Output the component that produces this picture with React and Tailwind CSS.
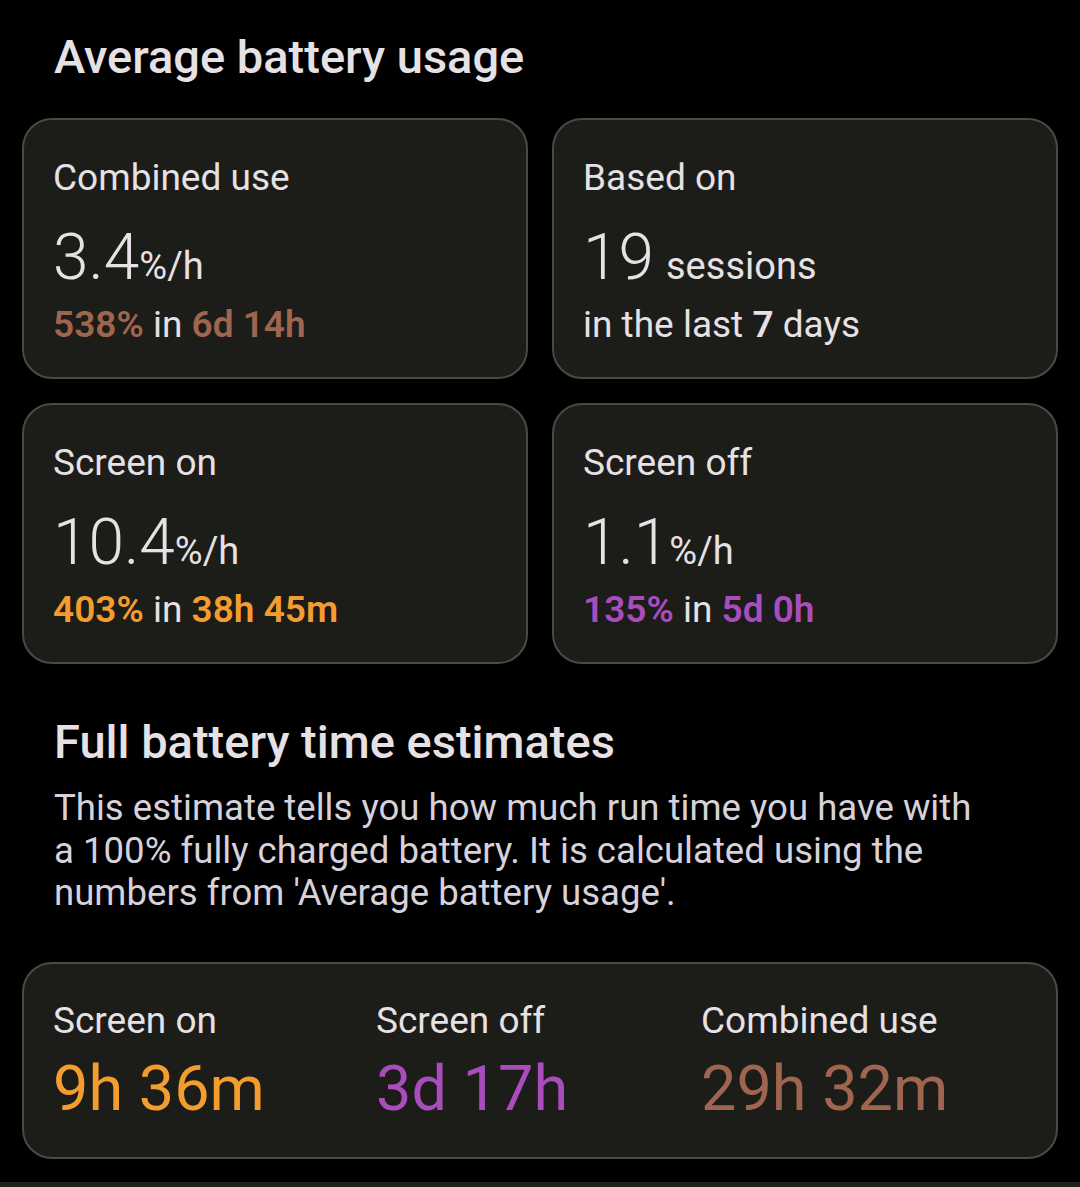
const usage = [
  {
    label: "Combined use",
    value: "3.4",
    unit: "%/h",
    amount: "538%",
    span: "6d 14h",
    color: "text-[#a0654e]",
  },
  { label: "Based on", value: "19", unit: "sessions", days: "7" },
  {
    label: "Screen on",
    value: "10.4",
    unit: "%/h",
    amount: "403%",
    span: "38h 45m",
    color: "text-[#f39c2f]",
  },
  {
    label: "Screen off",
    value: "1.1",
    unit: "%/h",
    amount: "135%",
    span: "5d 0h",
    color: "text-[#a94dbd]",
  },
];

const estimates = [
  { label: "Screen on", value: "9h 36m", color: "text-[#f39c2f]" },
  { label: "Screen off", value: "3d 17h", color: "text-[#a94dbd]" },
  { label: "Combined use", value: "29h 32m", color: "text-[#a0654e]" },
];

function UsageCard({ item }) {
  return (
    <div className="h-[261px] rounded-[30px] border-2 border-[#4a4a42] bg-[#1c1c18] px-[29px] pt-[36px] text-[#e6e1e5]">
      <p className="text-[37px] leading-[44px]">{item.label}</p>
      <p className="mt-[26px] flex h-[64px] items-baseline">
        <span className="text-[64px] font-light leading-[64px]">{item.value}</span>
        <span className={item.days ? "ml-[12px] text-[38px] leading-none" : "text-[38px] leading-none"}>
          {item.unit}
        </span>
      </p>
      {item.days ? (
        <p className="mt-[13px] text-[37px] leading-[44px]">
          in the last <span className="font-semibold">{item.days}</span> days
        </p>
      ) : (
        <p className="mt-[13px] text-[37px] leading-[44px]">
          <span className={`font-semibold ${item.color}`}>{item.amount}</span> in{" "}
          <span className={`font-semibold ${item.color}`}>{item.span}</span>
        </p>
      )}
    </div>
  );
}

export default function App() {
  return (
    <div
      className="flex h-[1187px] w-[1080px] flex-col overflow-hidden bg-black"
      style={{ fontFamily: "Roboto, 'Noto Sans', sans-serif" }}
    >
      <h1 className="pl-[54px] pt-[27px] text-[47px] font-medium leading-[60px] text-[#e6e1e5]">
        Average battery usage
      </h1>

      <div className="mt-[31px] grid grid-cols-2 gap-[24px] px-[22px]">
        {usage.map((item) => (
          <UsageCard key={item.label} item={item} />
        ))}
      </div>

      <h2 className="mt-[48px] pl-[54px] text-[47px] font-medium leading-[60px] text-[#e6e1e5]">
        Full battery time estimates
      </h2>
      <p className="mt-[15px] pl-[54px] pr-[95px] text-[36.6px] leading-[42.5px] text-[#d6d1da]">
        This estimate tells you how much run time you have with a 100% fully charged battery. It is
        calculated using the numbers from 'Average battery usage'.
      </p>

      <div className="mx-[22px] mt-[47px] grid h-[197px] grid-cols-[323px_325px_1fr] rounded-[30px] border-2 border-[#4a4a42] bg-[#1c1c18] pl-[29px] pt-[35px]">
        {estimates.map((est) => (
          <div key={est.label}>
            <p className="text-[37px] leading-[44px] text-[#e6e1e5]">{est.label}</p>
            <p className={`mt-[10px] text-[63px] leading-[72px] ${est.color}`}>{est.value}</p>
          </div>
        ))}
      </div>

      <div className="mt-auto h-[5px] bg-[#1f211c]" />
    </div>
  );
}
